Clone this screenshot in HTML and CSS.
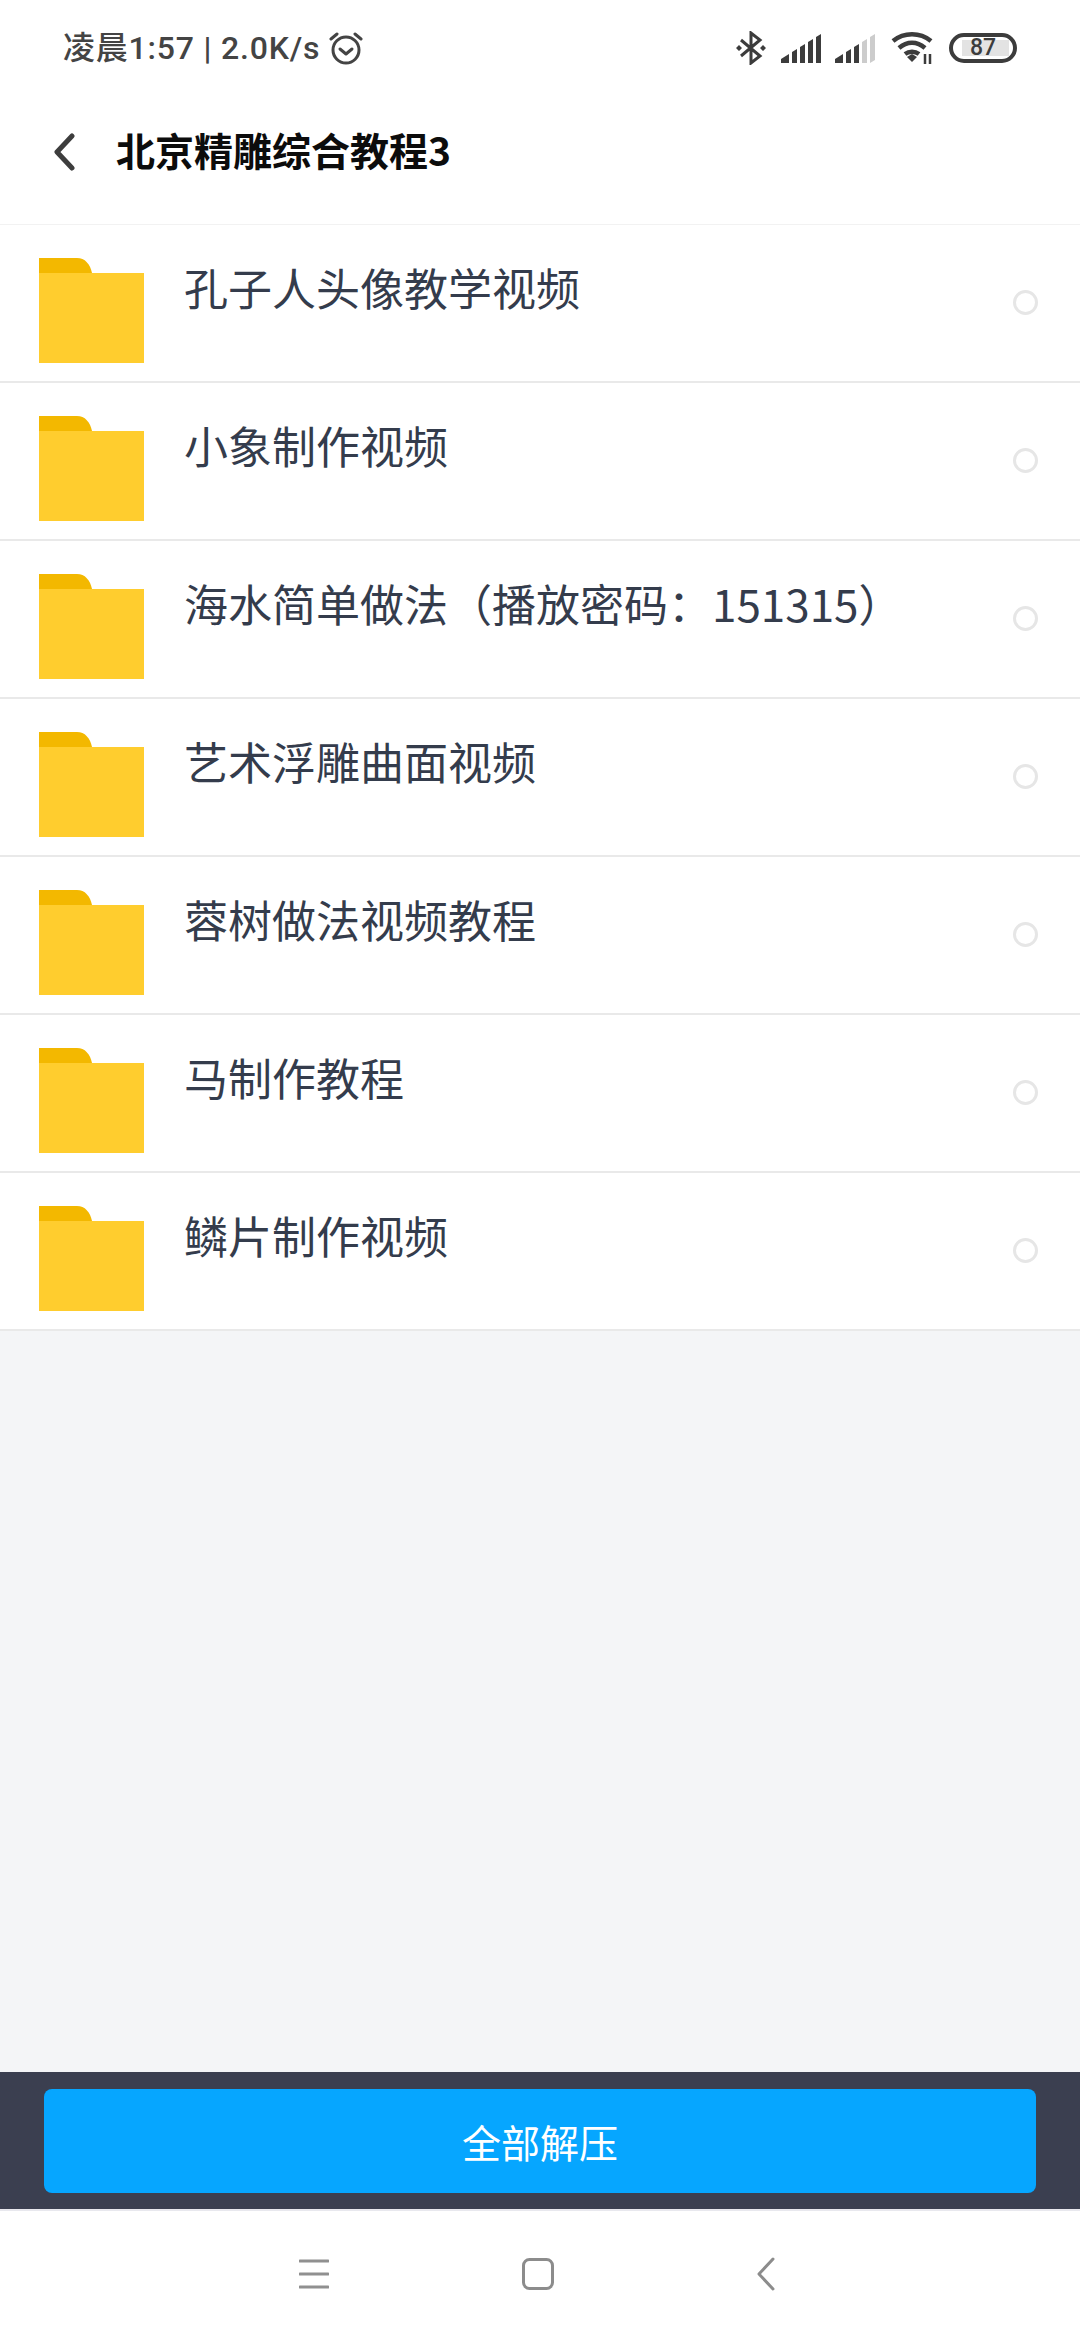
FILE: index.html
```html
<!DOCTYPE html>
<html lang="zh">
<head>
<meta charset="utf-8">
<title>北京精雕综合教程3</title>
<link rel="stylesheet" href="styles.css">
</head>
<body>
<div class="app">
  <header class="status">
    <div class="status-left">
      <span class="clock">凌晨1:57 | 2.0K/s</span>
      <svg class="alarm" width="34" height="34" viewBox="0 0 34 34" fill="none" stroke="#444" stroke-width="3" stroke-linecap="round" stroke-linejoin="round"><circle cx="17" cy="19" r="13"/><path d="M11 18l6 5 6-5"/><path d="M2 8l6-5M32 8l-6-5"/></svg>
    </div>
    <div class="status-right">
      <svg class="i-bt" width="30" height="34" viewBox="0 0 30 34" fill="none" stroke="#3c3c3c" stroke-width="3"><path d="M5 9l19 16-9 7V2l9 7L5 25"/><path d="M0 17l3-3 3 3-3 3zM24 17l3-3 3 3-3 3z" fill="#3c3c3c" stroke="none"/></svg>
      <svg class="i-sig" width="40" height="29" viewBox="0 0 40 29" fill="#3c3c3c"><path d="M0 29v-4l8-5v9zM11 29V18l5-3v14zM19 29V13l5-3v19zM27 29V8l5-3v24zM35 29V3l5-3v29z"/></svg>
      <svg class="i-sig" width="40" height="29" viewBox="0 0 40 29" fill="#3c3c3c"><path d="M0 29v-4l8-5v9zM11 29V18l5-3v14zM19 29V13l5-3v19z"/><path d="M27 29V8l5-3v24zM35 29V3l5-3v26z" fill="#ccc"/></svg>
      <svg class="i-wifi" width="44" height="32" viewBox="0 0 44 32" fill="none" stroke="#3c3c3c" stroke-width="4.5"><path d="M2 9c11-9 27-9 38 0M8 16c8-7 18-7 26 0M14 22c4-3 10-3 14 0"/><path d="M16 25l5-3 5 3-5 5z" fill="#3c3c3c" stroke="none"/><path d="M34 22v10M39 22v10" stroke-width="2.5"/></svg>
      <div class="battery"><span class="battery-fill"></span><span class="battery-num">87</span></div>
    </div>
  </header>

  <nav class="titlebar">
    <svg class="back" width="22" height="38" viewBox="0 0 22 38" fill="none" stroke="#3d3d3d" stroke-width="5" stroke-linecap="round" stroke-linejoin="round"><path d="M19 3L4 19l15 16"/></svg>
    <h1 class="title">北京精雕综合教程3</h1>
  </nav>

  <ul class="list">
    <li class="row"><svg class="folder" viewBox="0 0 105 105"><use href="#fd"/></svg><span class="name">孔子人头像教学视频</span><i class="radio"></i></li>
    <li class="row"><svg class="folder" viewBox="0 0 105 105"><use href="#fd"/></svg><span class="name">小象制作视频</span><i class="radio"></i></li>
    <li class="row"><svg class="folder" viewBox="0 0 105 105"><use href="#fd"/></svg><span class="name">海水简单做法（播放密码：151315）</span><i class="radio"></i></li>
    <li class="row"><svg class="folder" viewBox="0 0 105 105"><use href="#fd"/></svg><span class="name">艺术浮雕曲面视频</span><i class="radio"></i></li>
    <li class="row"><svg class="folder" viewBox="0 0 105 105"><use href="#fd"/></svg><span class="name">蓉树做法视频教程</span><i class="radio"></i></li>
    <li class="row"><svg class="folder" viewBox="0 0 105 105"><use href="#fd"/></svg><span class="name">马制作教程</span><i class="radio"></i></li>
    <li class="row"><svg class="folder" viewBox="0 0 105 105"><use href="#fd"/></svg><span class="name">鳞片制作视频</span><i class="radio"></i></li>
  </ul>

  <div class="spacer"></div>

  <div class="action"><button class="btn">全部解压</button></div>

  <footer class="navbar">
    <svg width="30" height="30" viewBox="0 0 30 30" stroke="#909090" stroke-width="3" stroke-linecap="round"><path d="M1 2h28M1 15h28M1 28h28"/></svg>
    <svg width="32" height="32" viewBox="0 0 32 32" fill="none" stroke="#8c8c8c" stroke-width="3"><rect x="1.5" y="1.5" width="29" height="29" rx="6"/></svg>
    <svg class="nav-back" width="18" height="34" viewBox="0 0 18 34" fill="none" stroke="#8c8c8c" stroke-width="3" stroke-linecap="round" stroke-linejoin="round"><path d="M16 2L2 17l14 15"/></svg>
  </footer>
</div>
<svg class="defs" width="0" height="0"><defs><g id="fd"><path d="M0 0h38c8 0 13 6 15 15H0z" fill="#f3b800"/><path d="M0 15h105v90H0z" fill="#ffcd2e"/></g></defs></svg>
</body>
</html>
```
FILE: styles.css
```css
* { box-sizing: border-box; margin: 0; padding: 0; }
html, body { width: 1080px; height: 2340px; background: #fff; overflow: hidden; }
body { font-family: "Noto Sans CJK SC", Roboto, sans-serif; }
.app { width: 1080px; height: 2340px; display: flex; flex-direction: column; background: #f4f5f7; }
.status { height: 96px; background: #fff; display: flex; align-items: center; justify-content: space-between; padding: 0 63px 0 63px; }
.status-left { display: flex; align-items: center; gap: 9px; }
.clock { font-size: 32px; line-height: 40px; font-weight: 500; letter-spacing: 0.8px; color: #444; font-family: Roboto, "Noto Sans CJK SC", sans-serif; }
.status-right { display: flex; align-items: center; }
.i-bt { margin-right: 15px; }
.i-sig { margin-right: 14px; }
.i-wifi { margin: 0 14px 0 2px; }
.battery { position: relative; width: 68px; height: 30px; border: 4px solid #3c3c3c; border-radius: 15px; display: flex; align-items: center; justify-content: center; }
.battery-fill { position: absolute; left: 9px; top: 3px; bottom: 3px; width: 47px; background: #e3e3e3; }
.battery-num { position: relative; font-size: 23px; line-height: 22px; font-weight: 500; color: #3c3c3c; font-family: Roboto, sans-serif; }
.titlebar { height: 128px; background: #fff; display: flex; align-items: center; padding: 0 0 16px 53px; }
.back { flex: none; }
.title { margin: -7px 0 0 41px; font-size: 39px; line-height: 50px; font-weight: 700; color: #0c0c0c; }
.list { list-style: none; background: #fff; border-top: 1px solid #f2f2f2; }
.row { height: 158px; display: flex; align-items: flex-start; padding: 33px 0 0 39px; position: relative; border-bottom: 2px solid #e9e9e9; }
.folder { width: 105px; height: 105px; flex: none; }
.name { margin: -1px 0 0 40px; font-size: 44px; line-height: 60px; color: #343c4c; white-space: nowrap; }
.radio { position: absolute; left: 1013px; top: 65px; width: 25px; height: 25px; border: 3px solid #e6e6e6; border-radius: 50%; }
.spacer { flex: 1; }
.action { height: 137px; background: #3b3f50; padding: 17px 44px 16px 44px; }
.btn { width: 100%; height: 104px; border: 0; border-radius: 8px; background: #06a6ff; color: #fff; font-size: 39px; font-family: inherit; font-weight: 400; }
.navbar { height: 131px; background: #fff; border-top: 2px solid #e8e8ee; display: grid; grid-template-columns: 30px 32px 18px; justify-content: start; align-items: center; column-gap: 193px; padding: 0 0 4px 299px; }
.nav-back { margin-left: 10px; }
.defs { position: absolute; }
```
